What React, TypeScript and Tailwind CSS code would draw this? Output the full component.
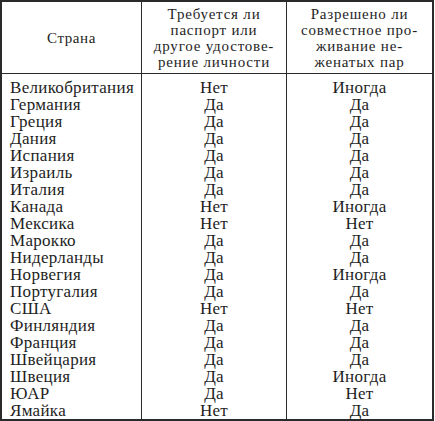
import React from "react";

const rows: [string, string, string][] = [
  ["Великобритания", "Нет", "Иногда"],
  ["Германия", "Да", "Да"],
  ["Греция", "Да", "Да"],
  ["Дания", "Да", "Да"],
  ["Испания", "Да", "Да"],
  ["Израиль", "Да", "Да"],
  ["Италия", "Да", "Да"],
  ["Канада", "Нет", "Иногда"],
  ["Мексика", "Нет", "Нет"],
  ["Марокко", "Да", "Да"],
  ["Нидерланды", "Да", "Да"],
  ["Норвегия", "Да", "Иногда"],
  ["Португалия", "Да", "Да"],
  ["США", "Нет", "Нет"],
  ["Финляндия", "Да", "Да"],
  ["Франция", "Да", "Да"],
  ["Швейцария", "Да", "Да"],
  ["Швеция", "Да", "Иногда"],
  ["ЮАР", "Да", "Нет"],
  ["Ямайка", "Нет", "Да"],
];

export default function App() {
  return (
    <div className="w-[435px] h-[421px] bg-white text-[#1e1e1e] font-['Liberation_Serif','DejaVu_Serif',serif]">
      <div className="w-[434px] h-[421px] border-2 border-[#2a2a2a] grid grid-cols-[140px_145px_1fr] grid-rows-[72px_1fr]">
        <div className="border-r border-b border-[#2a2a2a] flex items-center justify-center text-[15px] tracking-[0.6px] pt-[2px]">
          Страна
        </div>
        <div className="border-r border-b border-[#2a2a2a] flex flex-col items-center justify-center text-[15px] leading-[16px] tracking-[0.8px] text-center">
          <span>Требуется ли</span>
          <span>паспорт или</span>
          <span>другое удостове-</span>
          <span>рение личности</span>
        </div>
        <div className="border-b border-[#2a2a2a] flex flex-col items-center justify-center text-[15px] leading-[16px] tracking-[0.8px] text-center">
          <span>Разрешено ли</span>
          <span>совместное про-</span>
          <span>живание не-</span>
          <span>женатых пар</span>
        </div>
        <div className="border-r border-[#2a2a2a] pt-[5px] pl-[8px] text-[17px] leading-[17px] tracking-[0.3px]">
          {rows.map((r) => (
            <div key={r[0]}>{r[0]}</div>
          ))}
        </div>
        <div className="border-r border-[#2a2a2a] pt-[5px] text-[17px] leading-[17px] tracking-[0.3px] text-center">
          {rows.map((r, i) => (
            <div key={i}>{r[1]}</div>
          ))}
        </div>
        <div className="pt-[5px] text-[17px] leading-[17px] tracking-[0.3px] text-center">
          {rows.map((r, i) => (
            <div key={i}>{r[2]}</div>
          ))}
        </div>
      </div>
    </div>
  );
}
